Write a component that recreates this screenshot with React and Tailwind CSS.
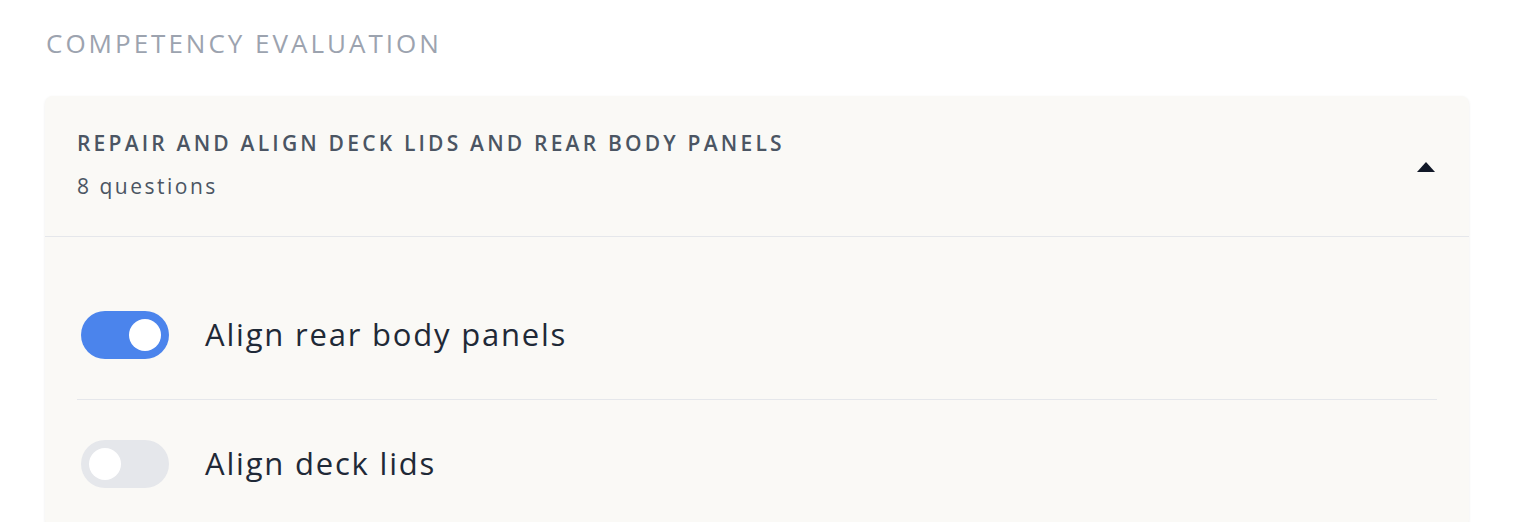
import { useState } from 'react';

function Toggle({ on, onChange }) {
  return (
    <button
      type="button"
      onClick={onChange}
      className={`relative w-[88px] h-12 rounded-full shrink-0 transition-colors ${on ? 'bg-[#4b84ec]' : 'bg-[#e5e7eb]'}`}
    >
      <span
        className={`absolute top-2 w-8 h-8 rounded-full bg-white transition-all ${on ? 'left-[48px]' : 'left-2'}`}
      />
    </button>
  );
}

export default function App() {
  const [open, setOpen] = useState(true);
  const [items, setItems] = useState([
    { label: 'Align rear body panels', on: true },
    { label: 'Align deck lids', on: false },
  ]);

  const flip = (i) =>
    setItems(items.map((it, j) => (j === i ? { ...it, on: !it.on } : it)));

  return (
    <div className="min-h-screen bg-white pt-[27px] pl-[45px] pr-[49px] font-['Open_Sans',sans-serif] overflow-hidden">
      <h2 className="text-[26px] leading-8 text-[#9ca3af] uppercase tracking-[3px] pl-px">
        Competency evaluation
      </h2>

      <div className="mt-[37px] bg-[#faf9f6] rounded-lg shadow-[0_1px_3px_rgba(0,0,0,0.08)]">
        {/* entête */}
        <div
          className="h-[141px] flex items-center justify-between pl-8 pr-8 border-b border-[#e5e7eb] cursor-pointer"
          onClick={() => setOpen(!open)}
        >
          <div className="-mt-[3px]">
            <p className="text-[21px] leading-7 font-semibold text-[#4b5563] uppercase tracking-[3.2px]">
              Repair and align deck lids and rear body panels
            </p>
            <p className="mt-[15px] text-[21px] leading-7 text-[#4b5563] tracking-[2.5px]">8 questions</p>
          </div>
          <svg width="20" height="12" viewBox="0 0 20 12" className="mr-[1px] mt-[2px]">
            <path d="M10 1 L19 11 L1 11 Z" fill="#111827" />
          </svg>
        </div>

        {open && (
          <div className="px-8 pt-[34px]">
            {items.map((it, i) => (
              <div
                key={it.label}
                className={`flex items-center gap-9 py-10 pl-1 ${i < items.length - 1 ? 'border-b border-[#e5e7eb]' : ''}`}
              >
                <Toggle on={it.on} onChange={() => flip(i)} />
                <span className="text-[31px] leading-9 text-[#1f2937] tracking-[1.8px] -mt-[3px]">{it.label}</span>
              </div>
            ))}
          </div>
        )}
      </div>
    </div>
  );
}
